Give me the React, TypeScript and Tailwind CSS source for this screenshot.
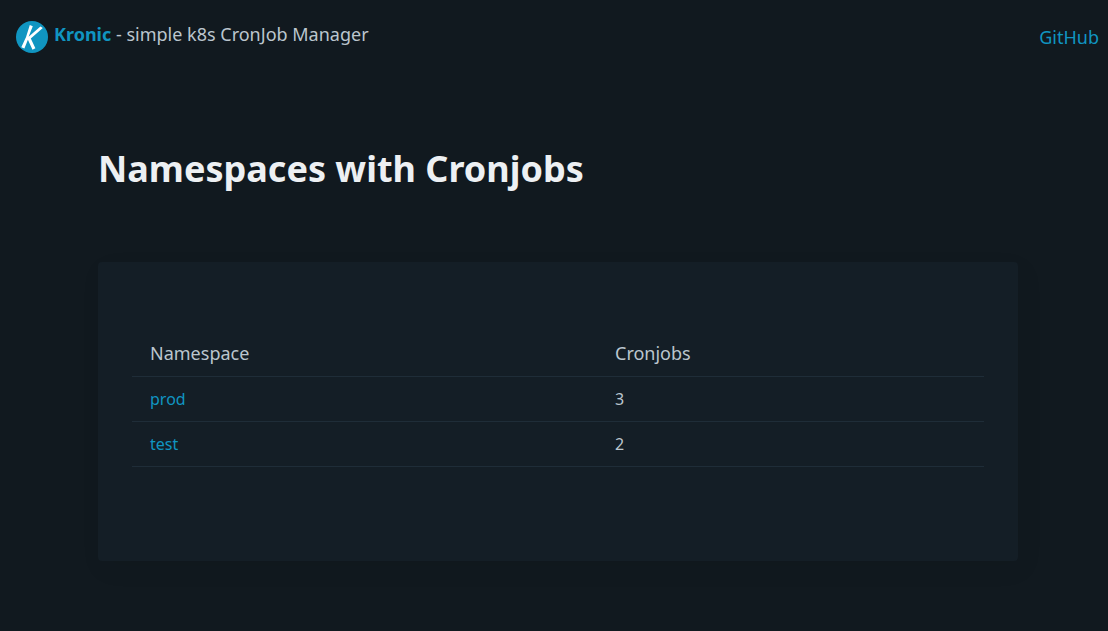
const namespaces = [
  { name: "prod", cronjobs: 3 },
  { name: "test", cronjobs: 2 },
];

function Logo() {
  return (
    <svg viewBox="0 0 32 32" className="mt-1 size-8 shrink-0" aria-hidden="true">
      <circle cx="16" cy="16" r="16" fill="#1095c1" />
      <path
        d="M13.8 4 L16.8 5.2 L12.6 15.8 L24.4 5.4 L26.8 7 L14.8 17.5 L19.4 27.2 L16.5 28.8 L11.9 18.8 L8.4 27.4 L5.3 26.2 Q10.8 16 13.8 4 Z"
        fill="#ffffff"
      />
    </svg>
  );
}

export default function App() {
  return (
    <div className="min-h-screen bg-[#11191f] font-['Noto_Sans',sans-serif] text-lg text-[#bbc6ce]">
      <nav className="flex items-start justify-between pt-[17px] pr-[9px] pl-4">
        <div className="flex items-start gap-1.5">
          <Logo />
          <p className="leading-[34px]">
            <a href="#" className="font-bold text-[#1095c1]">Kronic</a> - simple k8s CronJob Manager
          </p>
        </div>
        <a href="#" className="pt-1 leading-8 text-[#1095c1]">GitHub</a>
      </nav>
      <main className="pt-[87px] pr-[90px] pb-[70px] pl-[98px]">
        <h1 className="text-4xl leading-[58px] font-bold text-[#edf0f3]">Namespaces with Cronjobs</h1>
        <article className="mt-16 rounded-[4px] bg-[#141e26] px-[34px] pt-[68px] pb-[94px] shadow-[4px_8px_24px_rgba(0,0,0,0.06)]">
          <table className="w-full table-fixed border-collapse text-left">
            <colgroup>
              <col className="w-[465px]" />
              <col />
            </colgroup>
            <thead>
              <tr className="border-b border-[#1f2d38]">
                <th scope="col" className="h-[46px] px-[18px] font-normal">Namespace</th>
                <th scope="col" className="h-[46px] px-[18px] font-normal">Cronjobs</th>
              </tr>
            </thead>
            <tbody className="text-base">
              {namespaces.map((ns) => (
                <tr key={ns.name} className="h-[45px] border-b border-[#1f2d38]">
                  <td className="px-[18px]">
                    <a href="#" className="text-[#1095c1]">{ns.name}</a>
                  </td>
                  <td className="px-[18px]">{ns.cronjobs}</td>
                </tr>
              ))}
            </tbody>
          </table>
        </article>
      </main>
    </div>
  );
}
